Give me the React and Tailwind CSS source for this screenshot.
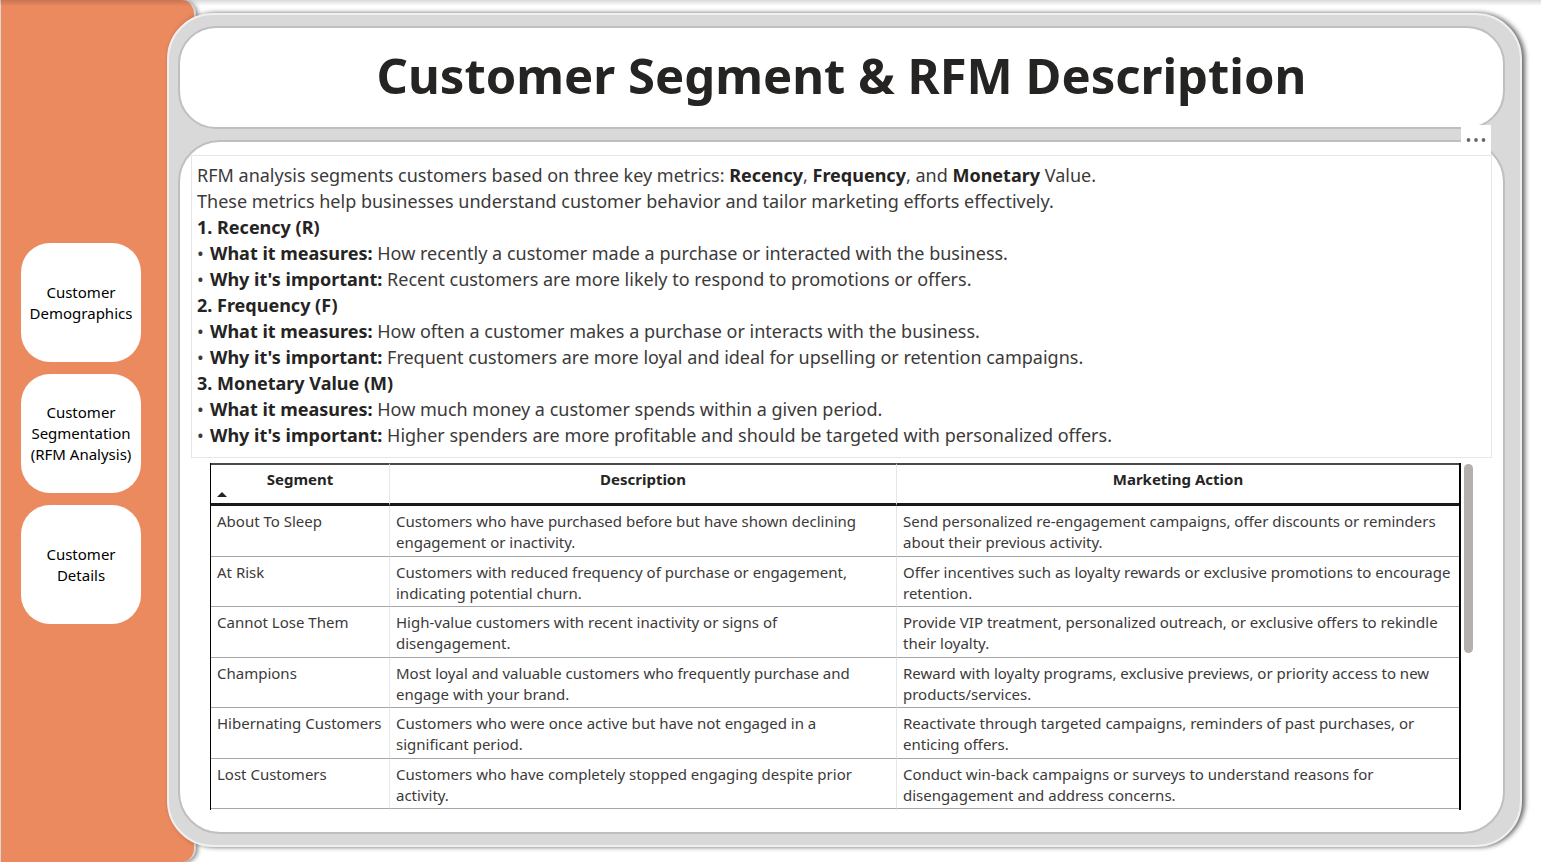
const pages = [
  { label: 'Customer Demographics' },
  { label: 'Customer Segmentation (RFM Analysis)' },
  { label: 'Customer Details' },
];

const metrics = [
  {
    title: '1. Recency (R)',
    measures: 'How recently a customer made a purchase or interacted with the business.',
    important: 'Recent customers are more likely to respond to promotions or offers.',
  },
  {
    title: '2. Frequency (F)',
    measures: 'How often a customer makes a purchase or interacts with the business.',
    important: 'Frequent customers are more loyal and ideal for upselling or retention campaigns.',
  },
  {
    title: '3. Monetary Value (M)',
    measures: 'How much money a customer spends within a given period.',
    important: 'Higher spenders are more profitable and should be targeted with personalized offers.',
  },
];

const segments = [
  ['About To Sleep', 'Customers who have purchased before but have shown declining engagement or inactivity.', 'Send personalized re-engagement campaigns, offer discounts or reminders about their previous activity.'],
  ['At Risk', 'Customers with reduced frequency of purchase or engagement, indicating potential churn.', 'Offer incentives such as loyalty rewards or exclusive promotions to encourage retention.'],
  ['Cannot Lose Them', 'High-value customers with recent inactivity or signs of disengagement.', 'Provide VIP treatment, personalized outreach, or exclusive offers to rekindle their loyalty.'],
  ['Champions', 'Most loyal and valuable customers who frequently purchase and engage with your brand.', 'Reward with loyalty programs, exclusive previews, or priority access to new products/services.'],
  ['Hibernating Customers', 'Customers who were once active but have not engaged in a significant period.', 'Reactivate through targeted campaigns, reminders of past purchases, or enticing offers.'],
  ['Lost Customers', 'Customers who have completely stopped engaging despite prior activity.', 'Conduct win-back campaigns or surveys to understand reasons for disengagement and address concerns.'],
];

function Sidebar() {
  return (
    <nav className="flex w-[196px] shrink-0 flex-col justify-center gap-3 rounded-r-[14px] border-l border-r-2 border-[#d9d9d9] bg-[#eb895f] pt-[5px] pl-5 shadow-[2px_1px_4px_rgba(0,0,0,0.45)]">
      {pages.map((page) => (
        <button
          key={page.label}
          type="button"
          className="h-[119px] w-[120px] rounded-[29px] bg-white px-2 text-[15px] leading-[21px] text-black"
        >
          {page.label}
        </button>
      ))}
    </nav>
  );
}

function Metric({ label, children }) {
  return (
    <li className="flex">
      <span className="w-[13px] shrink-0">•</span>
      <p>
        <b className="text-[#252423]">{label}</b> {children}
      </p>
    </li>
  );
}

function Description() {
  return (
    <section className="relative mx-[11px] mt-[13px] border border-[#e6e6e6] px-[5px] pt-1.5 pb-[9px] text-[18px] leading-[26px] text-[#3b3a39]">
      <p>
        RFM analysis segments customers based on three key metrics: <b className="text-[#252423]">Recency</b>,{' '}
        <b className="text-[#252423]">Frequency</b>, and <b className="text-[#252423]">Monetary</b> Value.
      </p>
      <p>These metrics help businesses understand customer behavior and tailor marketing efforts effectively.</p>
      {metrics.map((m) => (
        <div key={m.title}>
          <h2 className="font-bold text-[#252423]">{m.title}</h2>
          <ul>
            <Metric label="What it measures:">{m.measures}</Metric>
            <Metric label="Why it's important:">{m.important}</Metric>
          </ul>
        </div>
      ))}
      <button
        type="button"
        aria-label="More options"
        className="absolute right-0 -top-[31px] flex h-[30px] w-[30px] items-center justify-center bg-white"
      >
        <svg width="20" height="4" viewBox="0 0 20 4" fill="#6b6967" aria-hidden="true">
          <circle cx="2.5" cy="2" r="1.9" />
          <circle cx="10" cy="2" r="1.9" />
          <circle cx="17.5" cy="2" r="1.9" />
        </svg>
      </button>
    </section>
  );
}

function SegmentTable() {
  return (
    <section className="mx-[30px] mt-[5px] flex gap-[3px]">
      <div className="h-[347px] flex-1 overflow-hidden">
        <table className="w-full table-fixed border-separate border-spacing-0 border-r-2 border-l border-black text-[15px] leading-[21px] text-[#3b3a39]">
          <colgroup>
            <col className="w-[179px]" />
            <col className="w-[507px]" />
            <col />
          </colgroup>
          <thead className="text-[#252423]">
            <tr className="h-[43px]">
              <th scope="col" className="border-t-2 border-r border-b-[3px] border-t-[#4a4a4a] border-r-[#e6e6e6] border-b-[#1a1a1a] p-0 align-top">
                <div className="pt-1">Segment</div>
                <svg className="ml-[6px]" width="10" height="7" viewBox="0 0 10 7" fill="#252423" aria-hidden="true">
                  <path d="M0 7 5 2l5 5z" />
                </svg>
              </th>
              <th scope="col" className="border-t-2 border-r border-b-[3px] border-t-[#4a4a4a] border-r-[#e6e6e6] border-b-[#1a1a1a] p-0 pt-1 align-top">
                Description
              </th>
              <th scope="col" className="border-t-2 border-b-[3px] border-t-[#4a4a4a] border-b-[#1a1a1a] p-0 pt-1 align-top">
                Marketing Action
              </th>
            </tr>
          </thead>
          <tbody>
            {segments.map(([name, description, action]) => (
              <tr key={name} className="odd:h-[51px] even:h-[50px]">
                <td className="border-r border-b border-r-[#e6e6e6] border-b-[#a6a6a6] px-1.5 pt-[5px] pb-0 align-top whitespace-nowrap">{name}</td>
                <td className="border-r border-b border-r-[#e6e6e6] border-b-[#a6a6a6] px-1.5 pt-[5px] pb-0 align-top">{description}</td>
                <td className="border-b border-b-[#a6a6a6] px-1.5 pt-[5px] pb-0 align-top">{action}</td>
              </tr>
            ))}
            <tr className="h-[50px]">
              <td className="border-r border-[#e6e6e6]" />
              <td className="border-r border-[#e6e6e6]" />
              <td />
            </tr>
          </tbody>
        </table>
      </div>
      <div className="mt-px h-[189px] w-[9px] rounded-full bg-[#b3b0ad]" />
    </section>
  );
}

export default function App() {
  return (
    <div className="relative flex min-h-screen overflow-hidden bg-white font-['Segoe_UI','Noto_Sans',sans-serif]">
      <Sidebar />
      <main className="relative mt-[13px] mr-[19px] mb-[15px] -ml-[29px] flex min-w-0 flex-1 flex-col gap-[11px] rounded-[46px] border-2 border-[#f0f0f0] bg-[#d9d9d9] pt-[11px] pr-[15px] pb-[11px] pl-[9px] shadow-[3px_0px_5px_rgba(0,0,0,0.6)]">
        <header className="flex h-[103px] items-center justify-center rounded-[38px] border-2 border-[#bfbfbf] bg-white pb-1.5">
          <h1 className="text-[49px] leading-[60px] font-bold text-[#252423]">Customer Segment &amp; RFM Description</h1>
        </header>
        <div className="flex-1 rounded-[42px] border-2 border-[#bfbfbf] bg-white">
          <Description />
          <SegmentTable />
        </div>
      </main>
      <div className="absolute inset-x-0 top-0 h-1.5 bg-linear-to-b from-black/15 to-transparent" />
    </div>
  );
}
